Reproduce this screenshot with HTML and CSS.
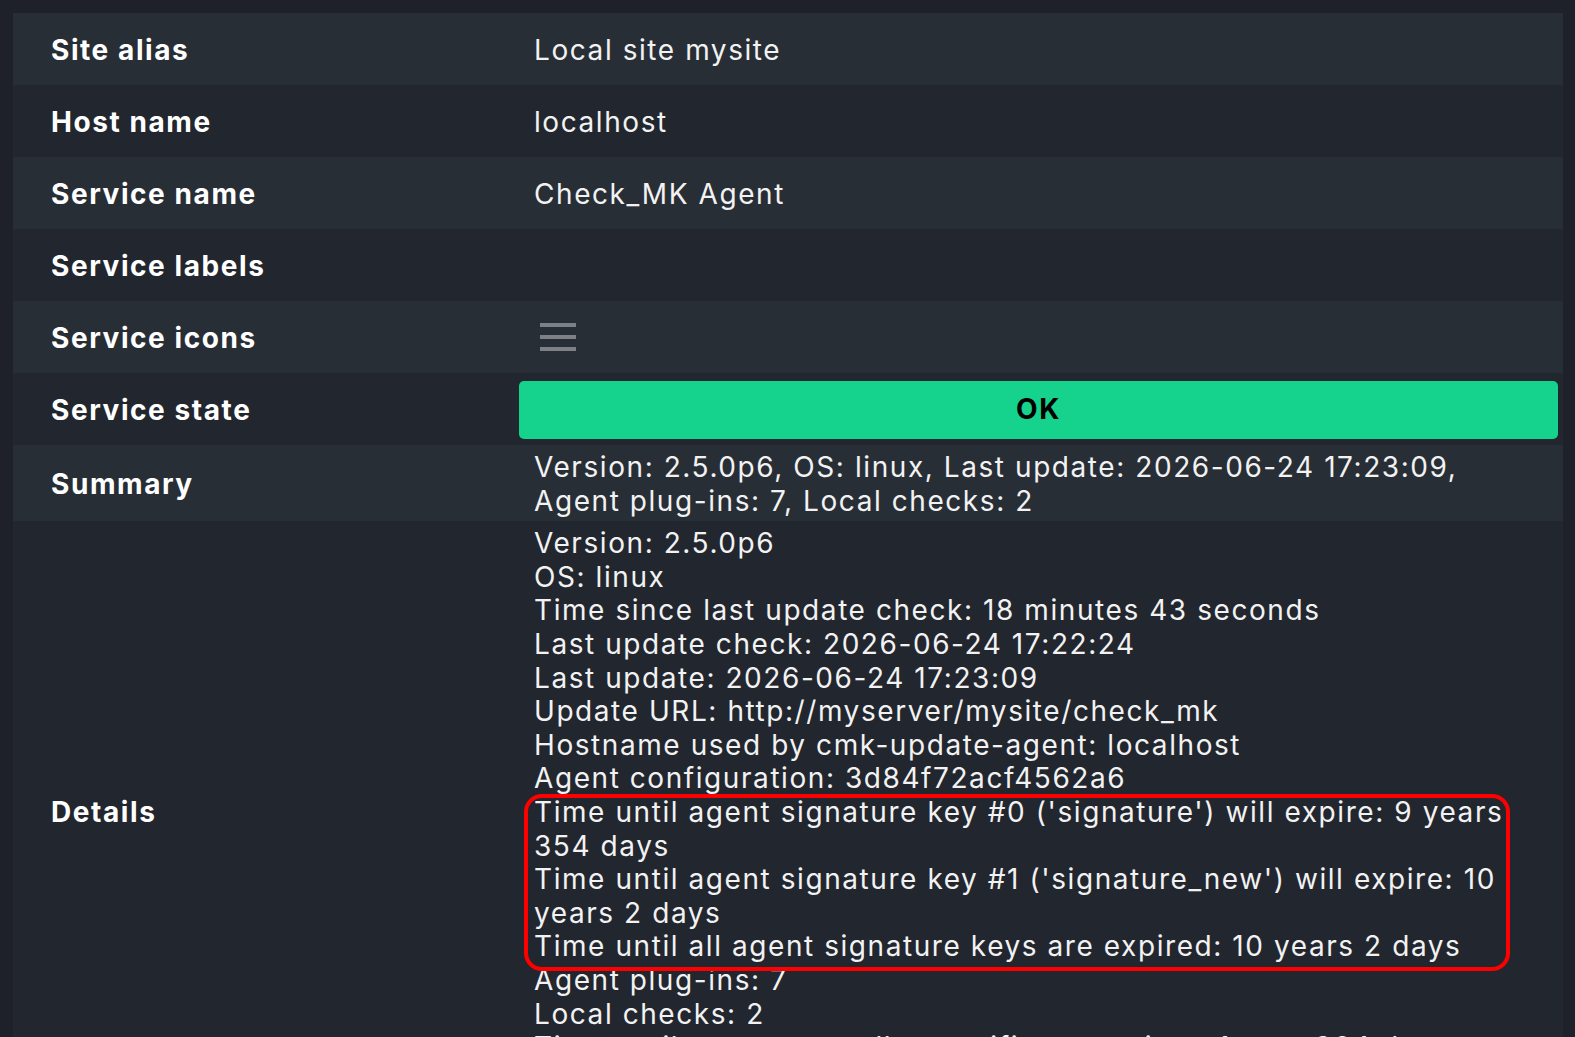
FILE: index.html
```html
<!DOCTYPE html>
<html lang="en">
<head>
  <meta charset="UTF-8">
  <title>Service Check_MK Agent, localhost</title>
  <link rel="stylesheet" href="styles.css">
</head>
<body>
  <div class="page">
    <div class="info-table">
      <div class="row odd">
        <div class="label">Site alias</div>
        <div class="value">Local site mysite</div>
      </div>
      <div class="row even">
        <div class="label">Host name</div>
        <div class="value">localhost</div>
      </div>
      <div class="row odd">
        <div class="label">Service name</div>
        <div class="value">Check_MK Agent</div>
      </div>
      <div class="row even">
        <div class="label">Service labels</div>
        <div class="value"></div>
      </div>
      <div class="row odd">
        <div class="label">Service icons</div>
        <div class="value">
          <svg class="menu-icon" width="36" height="28" viewBox="0 0 36 28">
            <rect x="0" y="0" width="36" height="4" fill="#7d8085"/>
            <rect x="0" y="12" width="36" height="4" fill="#7d8085"/>
            <rect x="0" y="24" width="36" height="4" fill="#7d8085"/>
          </svg>
        </div>
      </div>
      <div class="row even">
        <div class="label">Service state</div>
        <div class="value state-cell">
          <div class="state ok">OK</div>
        </div>
      </div>
      <div class="row odd">
        <div class="label">Summary</div>
        <div class="value">Version: 2.5.0p6, OS: linux, Last update: 2026-06-24 17:23:09, Agent plug-ins: 7, Local checks: 2</div>
      </div>
      <div class="row even details">
        <div class="label">Details</div>
        <div class="value">
          <div>Version: 2.5.0p6</div>
          <div>OS: linux</div>
          <div>Time since last update check: 18 minutes 43 seconds</div>
          <div>Last update check: 2026-06-24 17:22:24</div>
          <div>Last update: 2026-06-24 17:23:09</div>
          <div>Update URL: http://myserver/mysite/check_mk</div>
          <div>Hostname used by cmk-update-agent: localhost</div>
          <div>Agent configuration: 3d84f72acf4562a6</div>
          <div class="marked">
            <div>Time until agent signature key #0 ('signature') will expire: 9 years 354 days</div>
            <div>Time until agent signature key #1 ('signature_new') will expire: 10 years 2 days</div>
            <div>Time until all agent signature keys are expired: 10 years 2 days</div>
          </div>
          <div>Agent plug-ins: 7</div>
          <div>Local checks: 2</div>
          <div>Time until agent controller certificate expires: 1 year 364 days</div>
          <div>Transport protocol: TLS</div>
        </div>
      </div>
    </div>
  </div>
</body>
</html>
```
FILE: styles.css
```css
body {
  margin: 0;
  background: #1e2129;
  color: #f2f2f2;
  font-family: Inter, "Noto Sans", sans-serif;
  font-size: 28px;
  line-height: 1.2;
  letter-spacing: 0.056em;
  overflow: hidden;
}
.page {
  padding: 13px 12px 0 13px;
}
.info-table {
  display: flex;
  flex-direction: column;
}
.row {
  display: grid;
  grid-template-columns: 506px 1fr;
  align-items: center;
  min-height: 72px;
  box-sizing: border-box;
  padding: 6px 0 3px;
}
.odd {
  background: #282e36;
}
.even {
  background: #22262e;
}
.label {
  padding-left: 38px;
  font-weight: 700;
  color: #ffffff;
}
.value {
  padding: 0 30px 0 15px;
}
.menu-icon {
  display: block;
  margin: -3px 0 0 6px;
}
.state-cell {
  padding: 0 5px 2px 0;
}
.state {
  height: 58px;
  border-radius: 5px;
  display: flex;
  align-items: center;
  justify-content: center;
  font-weight: 700;
  color: #000;
}
.ok {
  background: #15d38c;
}
.marked {
  position: relative;
}
.marked::after {
  content: "";
  position: absolute;
  top: -2px;
  bottom: -7px;
  left: -10px;
  right: 23px;
  border: 4px solid #ff0000;
  border-radius: 18px;
  pointer-events: none;
}
```
